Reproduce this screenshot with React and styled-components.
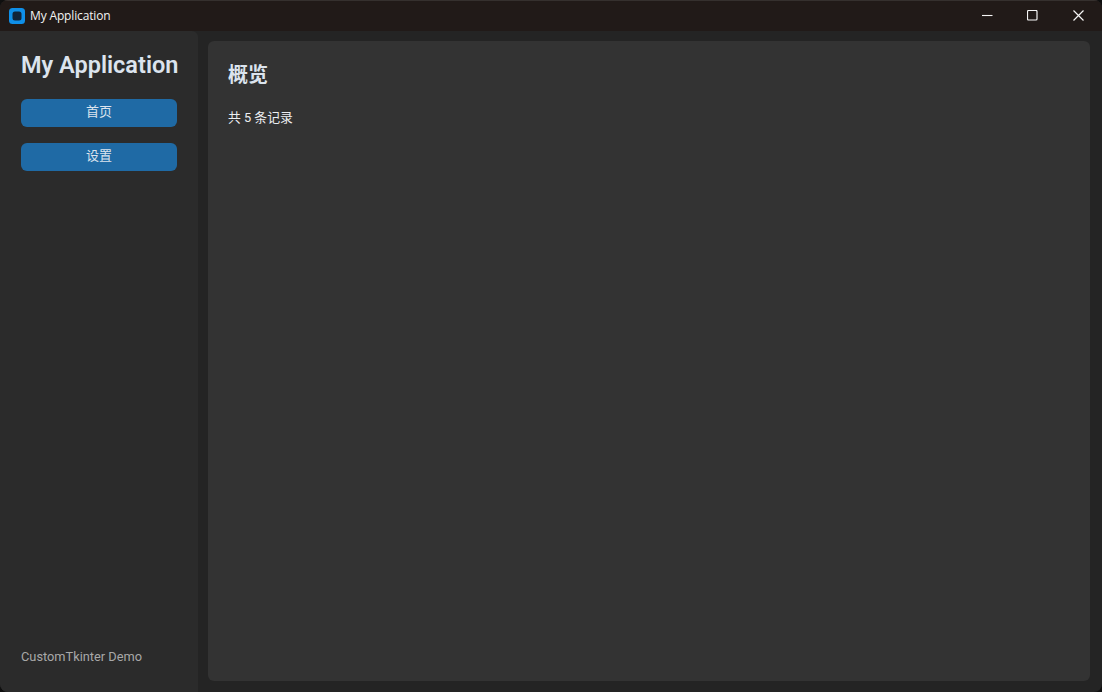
import React from "react";
import styled, { createGlobalStyle } from "styled-components";

const Global = createGlobalStyle`
  html, body { margin: 0; padding: 0; background: #0f0f0f; }
  body { font-family: Roboto, "Noto Sans CJK SC", sans-serif; }
`;

const Win = styled.div`
  width: 1102px;
  height: 692px;
  display: flex;
  flex-direction: column;
  background: #242424;
  border-radius: 8px;
  overflow: hidden;
  box-sizing: border-box;
`;

const TitleBar = styled.div`
  height: 31px;
  flex: none;
  display: flex;
  align-items: center;
  background: #211a18;
  border-top: 1px solid #35302e;
  box-sizing: border-box;
  padding-left: 9px;
  padding-bottom: 1px;
`;

const AppTitle = styled.span`
  font-family: "Open Sans", "Liberation Sans", sans-serif;
  font-size: 12px;
  color: #f2f2f2;
  margin-left: 5px;
  line-height: 29px;
  letter-spacing: -0.15px;
`;

const WinControls = styled.div`
  margin-left: auto;
  padding-right: 1px;
  display: flex;
  align-items: center;
`;

const WinButton = styled.div`
  width: 45.5px;
  height: 29px;
  display: flex;
  align-items: center;
  justify-content: center;
  color: #f5f5f5;
`;

const Body = styled.div`
  flex: 1;
  display: flex;
  min-height: 0;
`;

const Sidebar = styled.aside`
  width: 198px;
  flex: none;
  background: #2b2b2b;
  border-top-right-radius: 6px;
  box-sizing: border-box;
  padding: 19px 21px 27px;
  display: flex;
  flex-direction: column;
`;

const Brand = styled.h1`
  margin: 0;
  font: 600 23.5px/30px Roboto, sans-serif;
  color: #dce4ee;
  white-space: nowrap;
`;

const NavList = styled.nav`
  margin-top: 19px;
  display: flex;
  flex-direction: column;
  gap: 16px;
`;

const NavButton = styled.button`
  width: 156px;
  height: 28px;
  border: 0;
  padding: 0 0 2px;
  box-sizing: border-box;
  border-radius: 6px;
  background: #1f6aa5;
  color: #dce4ee;
  font: 400 13px/26px Roboto, "Noto Sans CJK SC", sans-serif;
`;

const Footer = styled.div`
  margin-top: auto;
  font: 400 12.8px/16px Roboto, sans-serif;
  color: #a8a8a8;
`;

const Main = styled.main`
  flex: 1;
  margin: 10px 12px 11px 10px;
  background: #333333;
  border-radius: 6px;
  padding: 21px 20px;
  box-sizing: border-box;
`;

const Heading = styled.h2`
  margin: 0;
  font: 700 20px/26px Roboto, "Noto Sans CJK SC", sans-serif;
  color: #dce4ee;
`;

const Count = styled.p`
  margin: 21px 0 0;
  font: 400 12.8px/18px Roboto, "Noto Sans CJK SC", sans-serif;
  color: #eceef1;
`;

export default function App() {
  return (
    <>
      <Global />
      <Win>
        <TitleBar>
          <svg width="16" height="16" viewBox="0 0 16 16" aria-hidden="true">
            <rect width="16" height="16" rx="3.5" fill="#0f8fe8" />
            <rect x="3.5" y="3.5" width="9" height="9" rx="2.5" fill="#10243a" />
          </svg>
          <AppTitle>My Application</AppTitle>
          <WinControls>
            <WinButton>
              <svg width="11" height="11" viewBox="0 0 11 11" aria-hidden="true">
                <path d="M0 5.5H10.5" stroke="currentColor" strokeWidth="1.1" fill="none" />
              </svg>
            </WinButton>
            <WinButton>
              <svg width="11" height="11" viewBox="0 0 11 11" aria-hidden="true">
                <rect x="0.5" y="0.5" width="9.5" height="9.5" rx="1" stroke="currentColor" strokeWidth="1.2" fill="none" />
              </svg>
            </WinButton>
            <WinButton>
              <svg width="11" height="11" viewBox="0 0 11 11" aria-hidden="true">
                <path d="M0.5 0.5L10.5 10.5M10.5 0.5L0.5 10.5" stroke="currentColor" strokeWidth="1.2" fill="none" />
              </svg>
            </WinButton>
          </WinControls>
        </TitleBar>
        <Body>
          <Sidebar>
            <Brand>My Application</Brand>
            <NavList>
              <NavButton>首页</NavButton>
              <NavButton>设置</NavButton>
            </NavList>
            <Footer>CustomTkinter Demo</Footer>
          </Sidebar>
          <Main>
            <Heading>概览</Heading>
            <Count>共 5 条记录</Count>
          </Main>
        </Body>
      </Win>
    </>
  );
}
